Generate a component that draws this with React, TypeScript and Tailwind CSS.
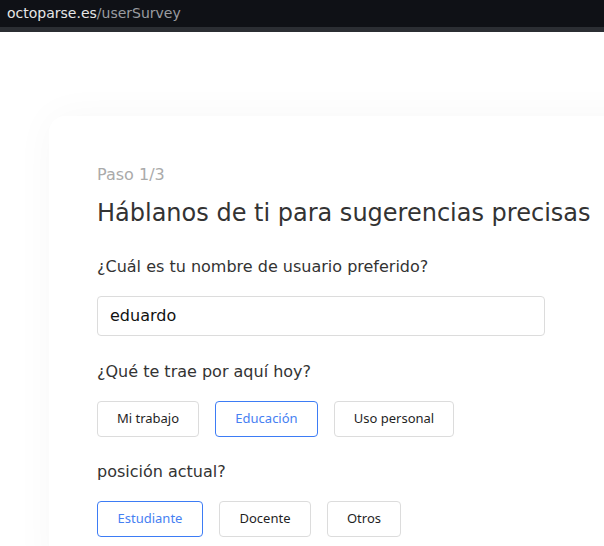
import React from 'react';

const font = { fontFamily: '"DejaVu Sans", sans-serif' };

const purposes = [
  { label: 'Mi trabajo', w: 'w-[102px]', active: false },
  { label: 'Educación', w: 'w-[103px]', active: true },
  { label: 'Uso personal', w: 'w-[120px]', active: false },
];

const positions = [
  { label: 'Estudiante', w: 'w-[106px]', active: true },
  { label: 'Docente', w: 'w-[92px]', active: false },
  { label: 'Otros', w: 'w-[74px]', active: false },
];

const Choice = ({ label, w, active }: { label: string; w: string; active: boolean }) => (
  <button
    className={
      active
        ? `${w} h-[36px] rounded-[4px] border border-[#3d7cf5] bg-white font-['Noto_Sans',sans-serif] text-[13px] text-[#4680f2]`
        : `${w} h-[36px] rounded-[4px] border border-[#dcdcdc] bg-white font-['Noto_Sans',sans-serif] text-[13px] text-[#1f1f1f]`
    }
  >
    {label}
  </button>
);

export default function App() {
  return (
    <div className="h-[546px] w-[604px] overflow-hidden bg-white" style={font}>
      <div className="flex h-[27px] items-center bg-[#0f1116] pl-[7px] text-[14px]">
        <span className="text-[#e6e6e6]">octoparse.es</span>
        <span className="text-[#9a9ca0]">/userSurvey</span>
      </div>
      <div className="h-[5px] bg-[#2b2e33]" />
      <div className="pl-[49px] pt-[84px]">
        <div className="w-[620px] rounded-[16px] bg-white pl-[48px] pt-[47px] pb-[40px] shadow-[0_0_40px_rgba(0,0,0,0.035)]">
          <p className="text-[16px] leading-[24px] text-[#aaaaaa]">Paso 1/3</p>
          <h1 className="mt-[10px] text-[24px] leading-[32px] text-[#333333]">
            Háblanos de ti para sugerencias precisas
          </h1>
          <p className="mt-[26px] text-[16px] leading-[24px] text-[#333333]">
            ¿Cuál es tu nombre de usuario preferido?
          </p>
          <div className="mt-[17px] flex h-[40px] w-[448px] items-center rounded-[4px] border border-[#dcdcdc] px-[12px] text-[16px] text-[#111111]">
            eduardo
          </div>
          <p className="mt-[24px] text-[16px] leading-[24px] text-[#333333]">¿Qué te trae por aquí hoy?</p>
          <div className="mt-[17px] flex gap-[16px]">
            {purposes.map((p) => (
              <Choice key={p.label} {...p} />
            ))}
          </div>
          <p className="mt-[23px] text-[16px] leading-[24px] text-[#333333]">posición actual?</p>
          <div className="mt-[17px] flex gap-[16px]">
            {positions.map((p) => (
              <Choice key={p.label} {...p} />
            ))}
          </div>
        </div>
      </div>
    </div>
  );
}
